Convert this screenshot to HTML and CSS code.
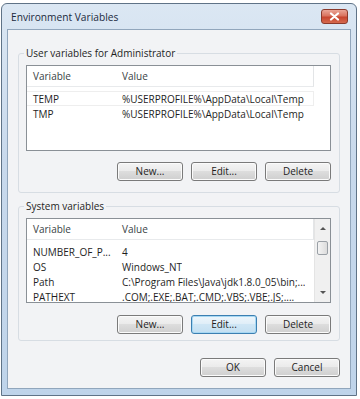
FILE: index.html
```html
<!DOCTYPE html>
<html>
<head>
<meta charset="utf-8">
<link rel="stylesheet" href="styles.css">
</head>
<body>
<div class="window">
  <div class="titlebar">
    <span class="title">Environment Variables</span>
    <span class="close"><svg width="11" height="9" viewBox="0 0 11 9"><path d="M2 1.5 L9 7.5 M9 1.5 L2 7.5" stroke="#fff" stroke-width="2.2" stroke-linecap="round"/></svg></span>
  </div>
  <div class="client">
    <fieldset class="group g1">
      <legend>User variables for Administrator</legend>
      <div class="list">
        <div class="head"><span class="c1">Variable</span><span class="c2">Value</span></div>
        <div class="rows">
          <div class="row sel"><span class="c1">TEMP</span><span class="c2">%USERPROFILE%\AppData\Local\Temp</span></div>
          <div class="row"><span class="c1">TMP</span><span class="c2">%USERPROFILE%\AppData\Local\Temp</span></div>
        </div>
      </div>
      <div class="btns">
        <button class="btn">New...</button>
        <button class="btn">Edit...</button>
        <button class="btn">Delete</button>
      </div>
    </fieldset>
    <fieldset class="group g2">
      <legend>System variables</legend>
      <div class="list sys">
        <div class="listmain">
          <div class="head"><span class="c1">Variable</span><span class="c2">Value</span></div>
          <div class="rows">
            <div class="row"><span class="c1">NUMBER_OF_P...</span><span class="c2">4</span></div>
            <div class="row"><span class="c1">OS</span><span class="c2">Windows_NT</span></div>
            <div class="row"><span class="c1">Path</span><span class="c2">C:\Program Files\Java\jdk1.8.0_05\bin;...</span></div>
            <div class="row"><span class="c1">PATHEXT</span><span class="c2">.COM;.EXE;.BAT;.CMD;.VBS;.VBE;.JS;....</span></div>
          </div>
        </div>
        <div class="scroll">
          <span class="arrow up"></span>
          <span class="thumb"></span>
          <span class="arrow down"></span>
        </div>
      </div>
      <div class="btns">
        <button class="btn">New...</button>
        <button class="btn focus">Edit...</button>
        <button class="btn">Delete</button>
      </div>
    </fieldset>
    <div class="footer">
      <button class="btn">OK</button>
      <button class="btn">Cancel</button>
    </div>
  </div>
</div>
</body>
</html>
```

FILE: styles.css
```css
html, body {
  margin: 0;
  padding: 0;
  background: #ffffff;
}
body {
  font-family: "Open Sans", "Noto Sans", sans-serif;
  font-size: 10px;
  color: #222;
}
.window {
  box-sizing: border-box;
  margin: 3px 0 0 1px;
  width: 356px;
  height: 393px;
  border: 1px solid #5f7387;
  border-radius: 6px 6px 0 0;
  background: linear-gradient(180deg, #dbe7f3 0%, #c8d9ec 40%, #bfd4ea 100%);
  padding: 0 5px 6px 5px;
  display: flex;
  flex-direction: column;
}
.titlebar {
  height: 25px;
  display: flex;
  justify-content: space-between;
  align-items: flex-start;
  flex-shrink: 0;
}
.title {
  margin: 6px 0 0 4px;
  font-size: 10.2px;
  color: #1b2a3d;
  line-height: 14px;
}
.close {
  margin: 5px 3px 0 0;
  width: 27px;
  height: 15px;
  box-sizing: border-box;
  border: 1px solid #8a3a2c;
  border-radius: 3px;
  background: linear-gradient(180deg, #eaa596 0%, #d9735f 45%, #c7452f 55%, #d56a4e 100%);
  display: flex;
  align-items: center;
  justify-content: center;
}
.client {
  flex: 1;
  background: #f2f3f5;
  border: 1px solid #91a6bc;
  display: flex;
  flex-direction: column;
}
.group {
  margin: 16px 0 0 10px;
  width: 322px;
  box-sizing: border-box;
  border: 1px solid #d7dde3;
  border-radius: 3px;
  padding: 0 8px 11px 7px;
  min-width: 0;
}
.group legend {
  padding: 0 2px;
  margin-left: -2px;
  line-height: 14px;
  color: #1e1e1e;
}
.g2 {
  margin-top: 6px;
  padding-bottom: 6px;
}
.list {
  margin-top: 5px;
  height: 86px;
  box-sizing: border-box;
  border: 1px solid #8a9096;
  background: #fff;
  overflow: hidden;
}
.sys {
  margin-top: 5px;
  height: 85px;
  display: flex;
}
.listmain {
  flex: 1;
}
.head {
  height: 21px;
  box-sizing: border-box;
  border-bottom: 1px solid #e8eaec;
  display: flex;
  align-items: center;
  color: #3a3f45;
  width: 287px;
  border-right: 1px solid #e3e5e7;
}
.c1 {
  width: 89px;
  padding-left: 6px;
  box-sizing: border-box;
  flex-shrink: 0;
  white-space: nowrap;
}
.c2 {
  padding-left: 6px;
  white-space: nowrap;
  overflow: hidden;
}
.rows {
  padding-top: 4px;
}
.row {
  height: 15px;
  display: flex;
  align-items: center;
  color: #1e1e1e;
  width: 287px;
  box-sizing: border-box;
}
.row.sel {
  border: 1px solid #eeeeee;
  border-left: none;
}
.scroll {
  width: 16px;
  background: #f0f0f0;
  border-left: 1px solid #e4e4e4;
  display: flex;
  flex-direction: column;
  align-items: center;
}
.arrow {
  width: 0;
  height: 0;
  border-left: 3px solid transparent;
  border-right: 3px solid transparent;
}
.arrow.up {
  margin-top: 8px;
  border-bottom: 3px solid #555;
}
.arrow.down {
  margin-top: auto;
  margin-bottom: 8px;
  border-top: 3px solid #555;
}
.thumb {
  margin-top: 11px;
  width: 11px;
  height: 14px;
  box-sizing: border-box;
  border: 1px solid #9aa0a6;
  border-radius: 2px;
  background: linear-gradient(90deg, #f4f4f4, #dcdcdc);
}
.btns {
  margin-top: 11px;
  display: flex;
  justify-content: flex-end;
  gap: 8px;
}
.g2 .btns {
  margin-top: 12px;
}
.btn {
  width: 66px;
  height: 19px;
  box-sizing: border-box;
  border: 1px solid #7a7a7a;
  border-radius: 3px;
  background: linear-gradient(180deg, #f4f4f4 0%, #ebebeb 45%, #dddddd 50%, #cfcfcf 100%);
  font-family: "Open Sans", "Noto Sans", sans-serif;
  font-size: 10px;
  color: #1e1e1e;
  padding: 0;
  line-height: 15px;
  box-shadow: inset 0 0 0 1px #fbfbfb;
}
.btn.focus {
  border-color: #3c7fb1;
  background: linear-gradient(180deg, #eef6fb 0%, #e0eef8 45%, #cfe6f5 50%, #c3dff1 100%);
  box-shadow: inset 0 0 0 1px #a7d8f3;
}
.footer {
  margin-top: 17px;
  margin-right: 10px;
  display: flex;
  justify-content: flex-end;
  gap: 8px;
}
```
